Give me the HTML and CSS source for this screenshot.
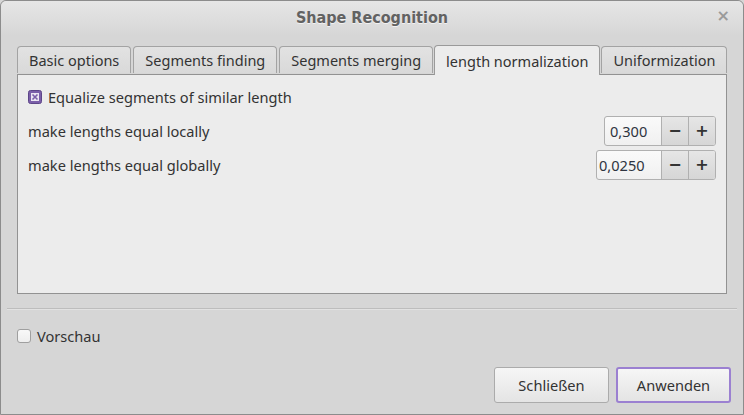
FILE: index.html
```html
<!DOCTYPE html>
<html>
<head>
<meta charset="utf-8">
<link rel="stylesheet" href="styles.css">
</head>
<body>
<div class="window">
  <div class="titlebar">
    <span class="title">Shape Recognition</span>
    <span class="close">×</span>
  </div>
  <div class="tabs">
    <div class="tab">Basic options</div>
    <div class="tab">Segments finding</div>
    <div class="tab">Segments merging</div>
    <div class="tab active">length normalization</div>
    <div class="tab">Uniformization</div>
  </div>
  <div class="panel">
    <label class="check-row">
      <svg class="check on" width="14" height="14" viewBox="0 0 14 14">
        <rect x="0.5" y="0.5" width="13" height="13" rx="2" fill="#7b5fa9" stroke="#5d4689"/>
        <rect x="3" y="3" width="8" height="8" fill="#ebe6f2"/>
        <path d="M4.5 4.5 L9.5 9.5 M9.5 4.5 L4.5 9.5" stroke="#7b5fa9" stroke-width="1.6"/>
      </svg>
      <span>Equalize segments of similar length</span>
    </label>
    <div class="row">
      <span>make lengths equal locally</span>
      <div class="spin">
        <div class="spin-value w1">0,300</div>
        <div class="spin-btn">−</div>
        <div class="spin-btn">+</div>
      </div>
    </div>
    <div class="row">
      <span>make lengths equal globally</span>
      <div class="spin">
        <div class="spin-value w2">0,0250</div>
        <div class="spin-btn">−</div>
        <div class="spin-btn">+</div>
      </div>
    </div>
  </div>
  <div class="separator"></div>
  <label class="preview">
    <span class="box"></span>
    <span>Vorschau</span>
  </label>
  <div class="buttons">
    <div class="btn">Schließen</div>
    <div class="btn default">Anwenden</div>
  </div>
</div>
</body>
</html>
```

FILE: styles.css
```css
html, body {
  margin: 0;
  padding: 0;
  background: #d6d6d6;
}
.window {
  width: 744px;
  height: 415px;
  box-sizing: border-box;
  border: 1px solid #8c8c8c;
  border-radius: 6px 6px 0 0;
  background: #d6d6d6;
  font-family: "Noto Sans", "Open Sans", sans-serif;
  font-size: 14.6px;
  color: #333333;
  display: flex;
  flex-direction: column;
  overflow: hidden;
}
.titlebar {
  height: 35px;
  box-sizing: border-box;
  padding-bottom: 2px;
  flex: none;
  position: relative;
  display: flex;
  align-items: center;
  justify-content: center;
  background: linear-gradient(#e6e6e6, #d6d6d6);
  border-radius: 5px 5px 0 0;
}
.title {
  font-family: "DejaVu Sans", sans-serif;
  font-stretch: condensed;
  font-weight: bold;
  font-size: 16px;
  color: #626262;
  text-shadow: 0 1px 0 #f2f2f2;
}
.close {
  position: absolute;
  right: 13px;
  top: 5px;
  font-family: "DejaVu Sans", sans-serif;
  font-weight: bold;
  font-size: 16px;
  color: #9a9a9a;
}
.tabs {
  display: flex;
  align-items: flex-end;
  gap: 2px;
  margin: 9px 16px 0 16px;
  height: 29px;
  flex: none;
  font-size: 14.5px;
}
.tab {
  height: 27px;
  box-sizing: border-box;
  padding: 0 11px;
  display: flex;
  align-items: center;
  border: 1px solid #a3a3a3;
  border-bottom: none;
  border-radius: 4px 4px 0 0;
  background: linear-gradient(#e2e2e2, #d9d9d9);
  color: #333333;
  white-space: nowrap;
  margin-bottom: 1px;
}
.tab.active {
  height: 30px;
  margin: 0 -1px -1px -1px;
  padding: 0 11px;
  background: #ececec;
  border-color: #9a9a9a;
  position: relative;
  z-index: 1;
}
.panel {
  flex: none;
  height: 220px;
  box-sizing: border-box;
  margin: 0 16px;
  border: 1px solid #929292;
  background: #ececec;
  padding: 11px 10px 0 10px;
  display: flex;
  flex-direction: column;
}
.check-row {
  display: flex;
  align-items: center;
  gap: 6px;
  height: 21px;
  margin-bottom: 4px;
}
.check {
  flex: none;
  display: block;
}
.row {
  display: flex;
  align-items: center;
  justify-content: space-between;
  margin-top: 5px;
  height: 29px;
}
.row + .row {
  margin-top: 5px;
}
.spin {
  display: flex;
  height: 30px;
  box-sizing: border-box;
  border: 1px solid #b0b0b0;
  border-radius: 3px;
  overflow: hidden;
  background: linear-gradient(#fafafa, #f0f0f0);
}
.spin-value {
  display: flex;
  align-items: center;
  box-sizing: border-box;
  color: #2e3440;
  border-right: 1px solid #b0b0b0;
}
.spin-value.w1 { width: 57px; padding-left: 5px; }
.spin-value.w2 { width: 65px; padding-left: 2px; }
.spin-btn {
  width: 26px;
  display: flex;
  align-items: center;
  justify-content: center;
  background: linear-gradient(#e6e6e6, #d6d6d6);
  font-family: "DejaVu Sans", sans-serif;
  font-weight: bold;
  font-size: 16px;
  color: #333333;
}
.spin-btn + .spin-btn {
  border-left: 1px solid #b0b0b0;
}
.separator {
  flex: none;
  margin: 14px 6px 0 6px;
  height: 1px;
  background: #bdbdbd;
  border-bottom: 1px solid #e2e2e2;
}
.preview {
  flex: none;
  display: flex;
  align-items: center;
  gap: 6px;
  margin: 17px 0 0 16px;
  height: 17px;
}
.box {
  width: 12px;
  height: 12px;
  border: 1px solid #9f9f9f;
  border-radius: 3px;
  background: linear-gradient(#f8f8f8, #eeeeee);
}
.buttons {
  flex: none;
  display: flex;
  justify-content: flex-end;
  gap: 7px;
  margin: 23px 12px 0 0;
}
.btn {
  width: 115px;
  height: 36px;
  box-sizing: border-box;
  display: flex;
  align-items: center;
  justify-content: center;
  border: 1px solid #ababab;
  border-radius: 3px;
  background: linear-gradient(#f6f6f6, #e4e4e4);
  color: #333333;
}
.btn.default {
  border: 2px solid #9b80d1;
}
```
